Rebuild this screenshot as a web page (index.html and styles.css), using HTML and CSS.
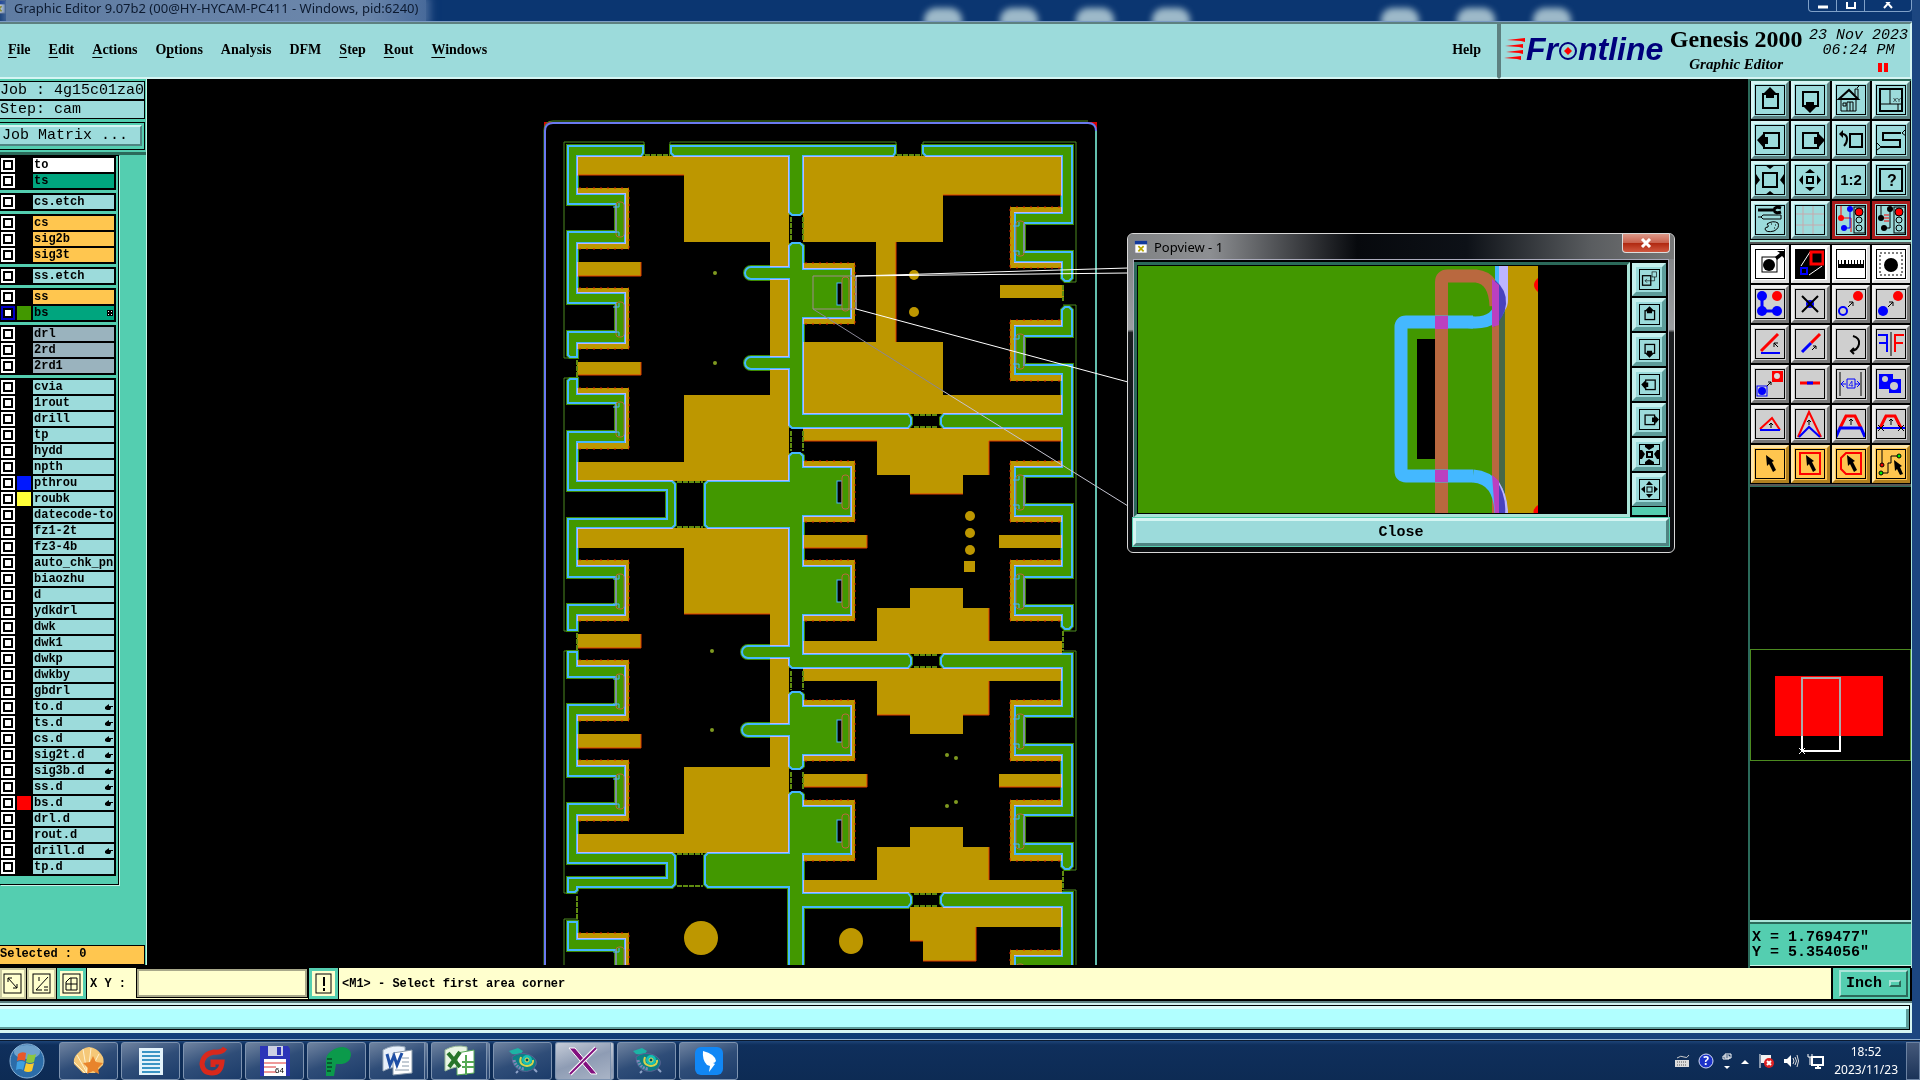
FILE: index.html
```html
<!DOCTYPE html>
<html lang="en">
<head>
    <meta charset="UTF-8">
    <meta name="viewport" content="width=device-width, initial-scale=1.0">
    <title>Graphic Editor 9.07b2</title>
    <link rel="stylesheet" href="styles.css">
</head>
<body>
    <!-- shared icons -->
    <svg class="defs" width="0" height="0">
        <symbol id="i-up" viewBox="0 0 30 30"><rect x="8" y="9" width="15" height="14" fill="none" stroke="#000" stroke-width="2"/><path d="M15 2l6 6h-2v5h-8V8H9z"/></symbol>
        <symbol id="i-down" viewBox="0 0 30 30"><rect x="8" y="7" width="15" height="14" fill="none" stroke="#000" stroke-width="2"/><path d="M15 28l6-6h-2v-5h-8v5H9z"/></symbol>
        <symbol id="i-left" viewBox="0 0 30 30"><rect x="9" y="8" width="15" height="15" fill="none" stroke="#000" stroke-width="2"/><path d="M2 15l6-6v3h5v7H8v3z"/></symbol>
        <symbol id="i-right" viewBox="0 0 30 30"><rect x="8" y="8" width="15" height="15" fill="none" stroke="#000" stroke-width="2"/><path d="M30 15l-6-6v3h-5v7h5v3z"/></symbol>
        <symbol id="i-in" viewBox="0 0 30 30"><rect x="8" y="8" width="14" height="14" fill="none" stroke="#000" stroke-width="2"/><path d="M10 0h10l-5 4zM10 30h10l-5-4zM1 9v11l4-5zM29 9v11l-4-5z"/></symbol>
        <symbol id="i-out" viewBox="0 0 30 30"><rect x="12" y="12" width="6" height="6" fill="none" stroke="#000" stroke-width="2"/><path d="M10 8h10l-5-4zM10 22h10l-5 4zM8 10v10l-4-5zM22 10v10l4-5z"/></symbol>
        <symbol id="p-in" viewBox="0 0 19 19"><rect x="7" y="7" width="5" height="5" fill="none" stroke="#000" stroke-width="2"/><path d="M5 0h9v2l-5 3-4-3zM5 19h9v-2l-5-3-4 3zM0 5v9h2l3-5-3-4zM19 5v9h-2l-3-5 3-4z"/></symbol>
        <symbol id="p-out" viewBox="0 0 19 19"><rect x="7" y="7" width="5" height="5" fill="none" stroke="#000"/><path d="M6 5h7L9 1zM6 14h7l-4 4zM5 6v7L1 9zM14 6v7l4-4z"/></symbol>
        <symbol id="i-pop" viewBox="0 0 30 30"><rect x="4" y="9" width="13" height="15" fill="none" stroke="#000" stroke-width="2"/><rect x="19" y="3" width="7" height="8" fill="none" stroke="#000"/><path d="M23 11v6H8m3-3l-3 3 3 3" fill="none" stroke="#000"/></symbol>
        <symbol id="i-cursor" viewBox="0 0 30 30"><path d="M11 6l8 6-2 1 4 8-3 2-4-8-2 2z"/></symbol>
        <symbol id="i-x" viewBox="0 0 16 16"><rect x="1" y="1" width="14" height="14" fill="#fff" stroke="#778"/><path d="M1 1h14v4H1z" fill="#123a9c"/><path d="M5 7l6 6M11 7l-6 6" stroke="#b9a800" stroke-width="2"/></symbol>
        <symbol id="i-turtle" viewBox="0 0 34 28"><path d="M3 4l9-3 5 3-3 4-8-1z" fill="#1db3a5"/><path d="M6 10q8-6 18-2 8 4 6 10-4 8-14 6-10-3-10-14z" fill="#0d7f86" stroke="#5b5f93"/><path d="M8 13q2 8 10 9" fill="none" stroke="#7f86b8" stroke-width="3" stroke-dasharray="2 1"/><path d="M15 10q-3 8 6 9 7-1 6-6" fill="none" stroke="#d9d34b" stroke-width="2"/><circle cx="21" cy="13" r="5" fill="#16c0b4"/><circle cx="21" cy="13" r="2" fill="#0a4a50" stroke="#e6e05a"/><path d="M28 22l3 3M12 24l-2 2" stroke="#8fa3c9" stroke-width="2"/></symbol>
    </svg>

    <div class="window">
        <div class="titlebar">
            <svg class="app-icon"><use href="#i-x"/></svg>
            <span class="caption">Graphic Editor 9.07b2 (00@HY-HYCAM-PC411 - Windows, pid:6240)</span>
            <span class="ghosts"><i></i><i></i><i></i><i></i></span>
            <span class="ghosts right"><i></i><i></i><i></i></span>
            <div class="window-buttons">
                <button aria-label="Minimize"><svg width="12" height="8"><path d="M1 5h10" stroke="#fff" stroke-width="3"/></svg></button>
                <button aria-label="Maximize"><svg width="12" height="8"><path d="M2 -2h8v8h-8z" fill="none" stroke="#fff" stroke-width="2"/></svg></button>
                <button class="wide" aria-label="Close"><svg width="12" height="8"><path d="M2 -3l8 9M10 -3l-8 9" stroke="#fff" stroke-width="2"/></svg></button>
            </div>
        </div>

        <div class="header">
            <div class="menubar">
                <button><u>F</u>ile</button>
                <button><u>E</u>dit</button>
                <button><u>A</u>ctions</button>
                <button>O<u>p</u>tions</button>
                <button>Analysis</button>
                <button>DFM</button>
                <button><u>S</u>tep</button>
                <button><u>R</u>out</button>
                <button><u>W</u>indows</button>
                <button class="help">Help</button>
            </div>
            <div class="brand">
                <div class="logo">
                    <svg width="22" height="24" viewBox="0 0 22 24"><path d="M3 3l18-2v4l-4 -1zM1 9l18-2v4l-4-1zM2 15l17-2v4l-4-1zM0 21l17-2v4l-4-1z" fill="#f00"/></svg>
                    <span>Fr<svg width="20" height="20" viewBox="0 0 20 20"><circle cx="10" cy="10" r="8" fill="none" stroke="#00007c" stroke-width="2"/><path d="M10 6l4 4-4 4-4-4z" fill="#f00"/></svg>ntline</span>
                </div>
                <div class="product">
                    <strong>Genesis 2000</strong>
                    <em>Graphic Editor</em>
                </div>
                <div class="date">23 Nov 2023<br>06:24 PM<span class="pause"></span></div>
            </div>
        </div>

        <div class="main">
            <div class="sidebar">
                <div class="job">
                    <div>Job : 4g15c01za0</div>
                    <div>Step: cam</div>
                </div>
                <div class="matrix"><button>Job Matrix ...</button></div>
                <div class="layers-wrap"><div class="layers" id="layers"></div></div>
                <div class="selected">Selected : 0</div>
            </div>

            <div class="canvas">
                <svg class="board" width="100%" height="100%">
                    <defs>
                        <g id="f-left"><path d="M0 0h52v61h-52v-6h48v-49h-48z" fill="#bd9700"/><path d="M2 0h50M2 61h50M52 2v59" stroke="#e02000" stroke-dasharray="2 5" fill="none"/></g>
                        <g id="f-right"><path d="M0 0h-52v61h52v-6h-48v-49h48z" fill="#bd9700"/><path d="M-2 0h-50M-2 61h-50M-52 2v59" stroke="#e02000" stroke-dasharray="2 5" fill="none"/></g>
                        <g id="slot" fill="none"><rect x="0" y="0" width="8" height="35" rx="3" stroke="#b9683f"/><path d="M-3 5h6v-4M-3 30h6v4" stroke="#44b8ff"/></g>
                        <g id="stub"><rect x="0" y="6" width="5" height="22" fill="#000" stroke="#44b8ff"/><path d="M5 6h6M5 28h6" stroke="#44b8ff"/><rect x="5" y="0" width="7" height="34" rx="3" fill="#429800" stroke="#b9683f"/></g>
                        <g id="areas">
                            <path d="M643 146H568V204H616V232H568V303H616V332H568V355l2 2H577V343H625V293H577V243H625V194H577V156H641l2-3z"/>
                            <path d="M570 379H577V394H625V442H577V481H672l3 3V525l-3 3H577V566H625V615H577V630H568V605H616V577H568V519H667V490H568V432H616V403H568V381z"/>
                            <path d="M568 652H577V666H625V715H577V766H625V815H577V853H672l3 3V884l-3 3H577V890l-2 2H568V878H667V863H568V804H616V776H568V705H616V677H568z"/>
                            <path d="M568 922H577V939H625V972H616V950H568z"/>
                            <path d="M671 146H895V153l-2 3H803V212l-3 3H792l-3-3V156H674l-3-3z"/>
                            <path d="M792 243H800l3 3V269H851V318H803V414H908l3 4V424l-3 4H792l-3-3V369H751a6 6 0 0 1 0-12H789V279H751a6 6 0 0 1 0-12H789V246z"/>
                            <path d="M792 453H800l3 3V467H851V516H803V566H851V615H803V654H908l3 4V664l-3 4H792l-3-3V658H748a6 6 0 0 1 0-12H789V528H708l-3-3V484l3-3H789V456z"/>
                            <path d="M792 692H800l3 3V706H851V755H803V766l-3 3H792l-3-3V736H748a6 6 0 0 1 0-12H789V695z"/>
                            <path d="M792 792H800l3 3V806H851V854H803V893H908l3 4V903l-3 4H803V972H789V887H708l-3-3V856l3-3H789V795z"/>
                            <path d="M923 146H1072V223H1024V252H1072V278l-3 3H1065l-3-3V262H1015V213H1062V156H926l-3-3z"/>
                            <path d="M1065 307H1069l3 3V336H1024V365H1072V476H1024V505H1072V577H1024V606H1072V626l-3 3H1065l-3-3V615H1015V566H1062V516H1015V467H1062V428H944l-3-4V418l3-4H1062V374H1015V326H1062V310z"/>
                            <path d="M944 654H1072V716H1024V745H1072V815H1024V844H1072V866l-3 3H1065l-3-3V854H1015V806H1062V755H1015V706H1062V668H944l-3-4V658z"/>
                            <path d="M944 893H1072V972H1015V956H1062V907H944l-3-4V897z"/>
                        </g>
                    </defs>
                    <g transform="translate(-147 -79)">
                        <!-- profile -->
                        <path d="M545 131v-8h8M1087 123h9v8" fill="none" stroke="#e00000" stroke-width="2"/>
                        <path d="M1096 130v840" stroke="#62bfae" stroke-width="2"/>
                        <path d="M544 970V130q0-9 9-9h535" fill="none" stroke="#4c8a20"/>
                        <path d="M545 970V131q0-8 8-8h535q8 0 8 8" fill="none" stroke="#6a7af0" stroke-width="2"/>
                        <path d="M644 155v-13h-80v216h14M578 378h-14v253h14M578 651h-14v242h14M578 919h-14v50M670 155v-13h226v13M923 155v-13h153v140h-12M1063 305h13v326h-13M1063 651h13v219h-13M1063 890h13v79" fill="none" stroke="#4c8a20"/>

                        <use href="#areas" class="area-rim"/>

                        <!-- copper -->
                        <g fill="#bd9700">
                            <path d="M577 156h212v325H577v-19h107v-67h86V242h-86v-67H577z"/>
                            <path d="M577 528h212v325H577v-19h107v-67h86V614h-86v-66H577z"/>
                            <path d="M803 156h259v39H943v47h-47v100h47v53h119v19H803v-72h73V242h-73z"/>
                            <path d="M803 428h259v13h-73v34h-26v19h-53v-19h-33v-34h-74z"/>
                            <path d="M803 654v-13h74v-33h33v-20h53v20h26v33h73v13z"/>
                            <path d="M803 668h259v13h-73v34h-26v19h-53v-19h-33v-34h-74z"/>
                            <path d="M803 893v-13h74v-33h33v-20h53v20h26v33h73v13z"/>
                            <path d="M910 907h152v20h-86v34h-53v-20h-13z"/>
                            <path d="M577 262h64v14h-64zM577 362h64v13h-64zM577 634h64v14h-64zM577 734h64v14h-64z"/>
                            <path d="M803 535h64v13h-64zM803 774h64v13h-64zM999 535h63v13h-63zM999 774h63v13h-63zM1000 285h64v13h-64z"/>
                            <circle cx="701" cy="938" r="17"/><ellipse cx="851" cy="941" rx="12" ry="13"/>
                            <circle cx="914" cy="275" r="5"/><circle cx="914" cy="312" r="5"/>
                            <circle cx="970" cy="516" r="5"/><circle cx="970" cy="533" r="5"/><circle cx="970" cy="550" r="5"/>
                            <path d="M964 561h11v11h-11z"/>
                        </g>
                        <g fill="#7f9a20"><circle cx="715" cy="273" r="2"/><circle cx="715" cy="363" r="2"/><circle cx="712" cy="651" r="2"/><circle cx="712" cy="730" r="2"/><circle cx="947" cy="755" r="2"/><circle cx="956" cy="758" r="2"/><circle cx="947" cy="806" r="2"/><circle cx="956" cy="802" r="2"/></g>
                        <path d="M577 175h107M943 195h119M577 276h64v-14M577 375h64v-13M577 648h64v-14M577 748h64v-14M684 614h86M803 441h74M989 475v-34h73M910 494h53M803 548h64v-13M803 787h64v-13M989 608v33M989 681v34h-26M877 715h33M989 847v33M999 787h63M896 242v100M976 927v34h-53M923 941h-13" fill="none" stroke="#e03a00"/>
                        <g id="fingers"></g>

                        <!-- gaps between areas -->
                        <path d="M789 215h14v28h-14zM789 428h14v25h-14zM789 668h14v24h-14zM789 769h14v23h-14z"/>

                        <!-- solder areas -->
                        <use href="#areas" class="area-fill"/>
                        <use href="#areas" class="area-edge"/>

                        <!-- break tabs -->
                        <g fill="none" stroke="#5f8c10" stroke-width="2" stroke-dasharray="5 1">
                            <path d="M645 155h25M897 155h25M791 217v24M803 217v24M677 482h26M677 527h26M914 415h24M914 427h24M791 431v20M803 431v20M791 671v19M803 671v19M791 772v18M803 772v18M677 854h26M677 886h26M914 655h24M914 667h24M914 894h24M914 906h24M577 360v17M577 633v17M577 896v23M1063 285v16M1063 631v20M1063 871v19"/>
                        </g>
                        <g id="slots"></g>

                        <!-- popview area -->
                        <g fill="none">
                            <path d="M856 276h-43v33h43" stroke="#a08a8c"/>
                            <path d="M856 276v33" stroke="#fff"/>
                            <path d="M856 276l272-8M856 276l272-3M856 309l272 73" stroke="#fff"/>
                            <path d="M813 309l130 82" stroke="#8a8798"/>
                            <path d="M943 391l185 115" stroke="#c4c4d0"/>
                        </g>
                    </g>
                </svg>

                <div class="popview">
                    <div class="pop-title">
                        <svg class="app-icon"><use href="#i-x"/></svg>
                        <span>Popview - 1</span>
                        <button aria-label="Close window"><svg width="12" height="10"><path d="M2 1l8 8M10 1l-8 8" stroke="#fff" stroke-width="3"/></svg></button>
                    </div>
                    <div class="pop-body">
                        <div class="pop-view">
                            <svg width="100%" height="100%" viewBox="0 0 490 247" preserveAspectRatio="xMinYMin slice">
                                <rect width="361" height="248" fill="#429800"/>
                                <rect x="361" width="6" height="248" fill="#466848"/>
                                <rect x="367" width="33" height="248" fill="#bd9700"/>
                                <rect x="279" y="73" width="19" height="120" fill="#000"/>
                                <rect x="354" y="20" width="7" height="228" fill="#b9683f"/>
                                <path d="M303.500 260V16q0-6 6-6H338Q357 12 358 40" fill="none" stroke="#b9683f" stroke-width="13"/>
                                <path d="M335 56H268q-5 0-5 5V205q0 5 5 5H335" fill="none" stroke="#44b8ff" stroke-width="13"/>
                                <path d="M330 56Q363 60 363 30V0" fill="none" stroke="#44b8ff" stroke-width="12"/>
                                <path d="M335 210Q363 212 363 250" fill="none" stroke="#44b8ff" stroke-width="13"/>
                                <path d="M361 0h9v34q0 6-3 10l-6-20z" fill="#bdb5ff"/>
                                <path d="M361 216q9 14 9 32h-9z" fill="#bdb5ff"/>
                                <path d="M357 14q12 10 11 24q-1 12-12 23z" fill="#4942bd"/>
                                <path d="M357 212q12 18 10 36h-8z" fill="#4942bd"/>
                                <path d="M354 13l7 6v40l-7 2zM354 209l7 6v33h-4z" fill="#ba40c0"/>
                                <path d="M297 50h13v13h-13zM297 204h13v12h-13z" fill="#ba40c0"/>
                                <path d="M400 12q-8 7 0 14zM400 239q-6 4-4 9h4z" fill="#f00"/>
                            </svg>
                        </div>
                        <div class="pop-tools">
                            <button aria-label="Pick area"><svg><use href="#i-pop"/></svg></button>
                            <button aria-label="Pan up"><svg><use href="#i-up"/></svg></button>
                            <button aria-label="Pan down"><svg><use href="#i-down"/></svg></button>
                            <button aria-label="Pan left"><svg><use href="#i-left"/></svg></button>
                            <button aria-label="Pan right"><svg><use href="#i-right"/></svg></button>
                            <button aria-label="Zoom in"><svg><use href="#p-in"/></svg></button>
                            <button aria-label="Zoom out"><svg><use href="#p-out"/></svg></button>
                        </div>
                    </div>
                    <button class="pop-close">Close</button>
                </div>
            </div>

            <div class="toolbar">
                <div class="tools">
                    <button><svg><use href="#i-up"/></svg></button>
                    <button><svg><use href="#i-down"/></svg></button>
                    <button><svg viewBox="0 0 30 30" fill="none" stroke="#000"><path d="M3 14L13 5l9 9z" stroke-width="2"/><path d="M5 14v12h15V14M11 26v-9h6v9M14 17v9M7 18h3v3h-3zM19 10V4h3v9M21 3l2-2"/></svg></button>
                    <button><svg viewBox="0 0 30 30" fill="none" stroke="#000"><rect x="4" y="4" width="22" height="22" stroke-width="2"/><path d="M14 4v15M4 19h22M22 19v7"/><text x="17" y="17" font-size="6" fill="#000" stroke="none">XY</text></svg></button>
                    <button><svg><use href="#i-left"/></svg></button>
                    <button><svg><use href="#i-right"/></svg></button>
                    <button><svg viewBox="0 0 30 30" fill="none" stroke="#000" stroke-width="2"><rect x="14" y="9" width="12" height="13"/><path d="M4 9h3q4 1 4 5t-3 7"/><path d="M3 9l4-4v8z" fill="#000" stroke="none"/></svg></button>
                    <button><svg viewBox="0 0 30 30" fill="none" stroke="#000"><path d="M25 8H7v7h17v7H5" stroke-width="2"/><path d="M30 4l-4 4 4 3M1 18l4 4-4 3"/></svg></button>
                    <button><svg><use href="#i-in"/></svg></button>
                    <button><svg><use href="#i-out"/></svg></button>
                    <button><svg viewBox="0 0 30 30"><text x="15" y="20" font-size="15" text-anchor="middle" font-weight="bold">1:2</text></svg></button>
                    <button><svg viewBox="0 0 30 30"><rect x="4" y="4" width="22" height="22" fill="none" stroke="#000" stroke-width="2"/><text x="16" y="21" font-size="16" text-anchor="middle" font-weight="bold">?</text></svg></button>
                    <button><svg viewBox="0 0 30 30" fill="none" stroke="#000"><path d="M3 5h15" stroke-width="3"/><path d="M26 3q-6-2-7 2 1 4 7 2" stroke-width="3"/><path d="M3 12h3l2-2h18v4H8l-2-2"/><path d="M12 19q6-4 11-1 2 5-4 8-8 2-9-2 0-2 3-2 1-1-1-3zM16 19h1M20 20h1M19 23h1"/></svg></button>
                    <button><svg viewBox="0 0 30 30"><path d="M8 0v30M18 0v30M0 9h30M0 20h30" stroke="#c7a9ad"/></svg></button>
                    <button class="red"><svg viewBox="0 0 30 30"><path d="M5 0v13h10v14" fill="none" stroke="#f00"/><path d="M14 5v18H8" fill="none" stroke="#00f"/><circle cx="5" cy="13" r="3" fill="#f00"/><circle cx="14" cy="4" r="3" fill="#00f"/><circle cx="8" cy="23" r="3" fill="#00f"/><g fill="none" stroke="#000"><rect x="18" y="2" width="11" height="26"/><circle cx="23" cy="7" r="4" fill="#f00"/><circle cx="23" cy="15" r="3"/><circle cx="23" cy="23" r="3"/></g></svg></button>
                    <button class="red"><svg viewBox="0 0 30 30"><path d="M5 0v13M14 5v18H8" fill="none" stroke="#000"/><path d="M8 10h5M8 13h5M8 16h5" stroke="#f00"/><circle cx="5" cy="13" r="3"/><circle cx="14" cy="4" r="3"/><circle cx="8" cy="23" r="3"/><g fill="none" stroke="#000"><rect x="18" y="2" width="11" height="26"/><circle cx="23" cy="7" r="4" fill="#f00"/><circle cx="23" cy="15" r="3"/><circle cx="23" cy="23" r="3"/></g></svg></button>
                </div>
                <div class="tools edit">
                    <button class="white"><svg viewBox="0 0 30 30"><rect x="7" y="8" width="15" height="15" fill="none" stroke="#000"/><circle cx="14" cy="16" r="6"/><path d="M20 8l5-4-3-2h8v8l-3-3-5 4z"/></svg></button>
                    <button class="white"><svg viewBox="0 0 30 30"><rect width="30" height="30"/><path d="M6 17L15 3M14 26l13-9" stroke="#fff"/><rect x="16" y="3" width="12" height="12" fill="none" stroke="#f00" stroke-width="3"/><rect x="6" y="19" width="6" height="6" fill="none" stroke="#00f" stroke-width="2"/></svg></button>
                    <button class="white"><svg viewBox="0 0 30 30"><path d="M2 11v8h26v-8h-1v4h-2v-4h-1v4h-2v-4h-1v4h-2v-4h-1v4h-2v-4h-1v4h-2v-4h-1v4h-2v-4h-1v4H9v-4H8v4H6v-4H5v4H3v-4z"/></svg></button>
                    <button class="white"><svg viewBox="0 0 30 30"><rect x="4" y="4" width="22" height="22" fill="none" stroke="#000" stroke-dasharray="2 2"/><circle cx="15" cy="16" r="7"/></svg></button>

                    <button><svg viewBox="0 0 30 30"><path d="M7 7v15h15" fill="none" stroke="#00f" stroke-width="3"/><g fill="#00f"><circle cx="7" cy="7" r="5"/><circle cx="7" cy="22" r="5"/><circle cx="22" cy="22" r="5"/></g><circle cx="22" cy="7" r="5" fill="#f00"/></svg></button>
                    <button><svg viewBox="0 0 30 30"><circle cx="15" cy="15" r="4" fill="#00f"/><path d="M7 7l16 16M23 7L7 23" stroke="#000" stroke-width="2"/></svg></button>
                    <button><svg viewBox="0 0 30 30"><circle cx="22" cy="7" r="5" fill="#f00"/><circle cx="7" cy="22" r="4" fill="none" stroke="#00f" stroke-width="2"/><path d="M12 18l5-5m-4 0h4v4" fill="none" stroke="#000"/></svg></button>
                    <button><svg viewBox="0 0 30 30"><circle cx="22" cy="7" r="5" fill="#f00"/><circle cx="7" cy="22" r="5" fill="#00f"/><path d="M12 18l5-5m-4 0h4v4" fill="none" stroke="#000"/></svg></button>

                    <button><svg viewBox="0 0 30 30" fill="none"><path d="M6 22L23 5" stroke="#f00" stroke-width="3"/><path d="M6 24h19" stroke="#00f" stroke-width="2"/><path d="M23 18l-4-4m0 4v-4h4" stroke="#000"/></svg></button>
                    <button><svg viewBox="0 0 30 30" fill="none"><path d="M16 14l9-9" stroke="#f00" stroke-width="3"/><path d="M7 23l9-9" stroke="#00f" stroke-width="3"/><path d="M17 21l4-4m-3 0h3v3" stroke="#000"/></svg></button>
                    <button><svg viewBox="0 0 30 30" fill="none"><path d="M17 7q7 2 6 8t-8 7m3-3l-3 3 3 3" stroke="#000" stroke-width="2"/></svg></button>
                    <button><svg viewBox="0 0 30 30" fill="none"><path d="M2 6h9v17M3 14h8" stroke="#00f" stroke-width="2"/><path d="M28 6h-9v17M19 14h8" stroke="#f00" stroke-width="2"/><path d="M15 3v24" stroke="#000"/></svg></button>

                    <button><svg viewBox="0 0 30 30"><rect x="17" y="2" width="11" height="11" fill="#f00"/><circle cx="22" cy="7" r="3" fill="#ddd"/><rect x="2" y="17" width="10" height="10" fill="none" stroke="#00f"/><circle cx="7" cy="22" r="4" fill="#00f"/><path d="M12 17l4-4m-3 0h3v3" fill="none" stroke="#000"/></svg></button>
                    <button><svg viewBox="0 0 30 30"><path d="M5 14h20" stroke="#f00" stroke-width="3"/><path d="M12 14h6" stroke="#00f" stroke-width="3"/></svg></button>
                    <button><svg viewBox="0 0 30 30" fill="none"><path d="M4 3v24M25 3v24" stroke="#000"/><path d="M5 15h5M19 15h5M8 12l-3 3 3 3M21 12l3 3-3 3M11 10h8v9h-8z" stroke="#00f"/><text x="15" y="18" font-size="9" text-anchor="middle" fill="#00f">4</text></svg></button>
                    <button><svg viewBox="0 0 30 30"><path d="M3 5h14v5h8v14H13v-4H3z" fill="#00f"/><circle cx="9" cy="10" r="3" fill="#ccc"/><circle cx="18" cy="17" r="4" fill="#ccc"/></svg></button>

                    <button><svg viewBox="0 0 30 30" fill="none"><path d="M5 20L17 9l8 12" stroke="#f00" stroke-width="2"/><path d="M5 21h20" stroke="#00f" stroke-width="2"/><path d="M16 19v-5m-2 2l2-2 2 2" stroke="#000"/></svg></button>
                    <button><svg viewBox="0 0 30 30" fill="none"><path d="M3 28L14 3l12 25" stroke="#f00" stroke-width="2"/><path d="M4 28l10-10 11 10" stroke="#00f" stroke-width="2"/><path d="M14 16v-5m-2 2l2-2 2 2" stroke="#000"/></svg></button>
                    <button><svg viewBox="0 0 30 30" fill="none"><path d="M4 19l6-12h9l6 12" stroke="#f00" stroke-width="3"/><path d="M0 28l4-9h21l4 9" stroke="#00f" stroke-width="3"/><path d="M15 16v-6m-2 2l2-2 2 2" stroke="#000"/></svg></button>
                    <button><svg viewBox="0 0 30 30" fill="none"><path d="M4 19l6-12h9l6 12" stroke="#f00" stroke-width="3"/><path d="M0 19h30" stroke="#00f" stroke-width="2"/><path d="M15 16v-6m-2 2l2-2 2 2M2 16l6 6M8 16l-6 6M22 16l6 6M28 16l-6 6" stroke="#000"/></svg></button>

                    <button class="gold"><svg><use href="#i-cursor"/></svg></button>
                    <button class="gold"><svg viewBox="0 0 30 30"><rect x="5" y="4" width="20" height="21" fill="none" stroke="#f00" stroke-width="2"/><use href="#i-cursor"/></svg></button>
                    <button class="gold"><svg viewBox="0 0 30 30"><path d="M10 4h15v21H10l-5-5V9z" fill="none" stroke="#f00" stroke-width="2"/><use href="#i-cursor"/></svg></button>
                    <button class="gold"><svg viewBox="0 0 30 30"><path d="M6 0v15M6 24h6V14h3V7h7" fill="none" stroke="#000"/><circle cx="6" cy="16" r="2" fill="#e00" stroke="#000"/><circle cx="5" cy="24" r="2" fill="#0e0" stroke="#000"/><circle cx="23" cy="7" r="2" fill="#0e0" stroke="#000"/><path d="M18 11l8 6-2 1 3 7-3 1-3-6-2 2z"/></svg></button>
                </div>
                <div class="overview">
                    <svg width="100%" height="112" viewBox="0 0 161 112">
                        <rect x="0.500" y="0.500" width="160" height="111" fill="none" stroke="#4c8a20"/>
                        <rect x="25" y="27" width="108" height="60" fill="#f00"/>
                        <path d="M52 87v15h38V87" fill="none" stroke="#fff" stroke-width="2"/>
                        <path d="M52 87V29h38v58" fill="none" stroke="#aaa" stroke-width="2"/>
                        <path d="M49 99l6 6M55 99l-6 6" stroke="#fff"/>
                    </svg>
                </div>
                <div class="coords">X = 1.769477"<br>Y = 5.354056"</div>
            </div>
        </div>

        <div class="statusbar">
            <button class="mode" aria-label="Line mode"><svg width="18" height="20" fill="none" stroke="#000"><rect x="0" y="0" width="17" height="19"/><path d="M4 4l9 10M4 8V4h4M13 10v4h-4"/></svg></button>
            <button class="mode" aria-label="Angle mode"><svg width="18" height="20" fill="none" stroke="#000"><rect x="0" y="0" width="17" height="19"/><path d="M3 16L15 3M3 16h6M6 3v4M11 13h4M11 16h4"/></svg></button>
            <button class="mode on" aria-label="Grid"><svg width="18" height="20" fill="none" stroke="#000"><rect x="0" y="0" width="17" height="19"/><path d="M3 8l4-4h7v12H3zM8 4v12M3 10h11"/></svg></button>
            <label for="xy">X Y :</label>
            <input id="xy" type="text">
            <button class="mode on" aria-label="Alert"><svg width="16" height="20" fill="none" stroke="#000"><rect x="0" y="0" width="15" height="19"/><path d="M8 3v9M8 14v3" stroke-width="2"/></svg></button>
            <span class="prompt">&lt;M1&gt; - Select first area corner</span>
            <div class="units"><select aria-label="Units"><option>Inch</option><option>mm</option></select><i></i></div>
        </div>
        <div class="message"><div></div></div>
    </div>

    <div class="taskbar">
        <button class="start" aria-label="Start"><svg width="38" height="38" viewBox="0 0 38 38"><circle cx="19" cy="19" r="17" fill="#2b6ca8" stroke="#8cb4d8"/><ellipse cx="19" cy="10" rx="13" ry="7" fill="#9cc6e4" opacity=".6"/><path d="M10 12q4-3 8-1l-1 8q-4-2-8 0z" fill="#e8582a"/><path d="M20 12q4 2 8 0l-2 8q-4 2-8 0z" fill="#8cc63e"/><path d="M9 20q4-2 8 0l-2 8q-3-2-7 0z" fill="#3f9fe0"/><path d="M18 21q4 2 8 0l-2 8q-4 2-8 0z" fill="#fbc92e"/></svg></button>
        <button class="task"><svg width="36" height="30" viewBox="0 0 36 30"><path d="M12 27L3 18q-1-6 3-10 5-6 12-7 8 1 12 7 4 5 2 11l-8 8z" fill="#f5c878"/><path d="M16 27L6 9M16 27L12 3M17 27L20 2M18 27L28 8M14 27L3 16" stroke="#fff0cc"/><path d="M22 10l3 6 7 1-5 5 1 6-6-3-6 3 1-6-5-5 7-1z" fill="#e8842c"/></svg></button>
        <button class="task"><svg width="26" height="30"><path d="M1 2h24v27H1z" fill="#e4f3fb"/><path d="M4 6h18M4 10h18M4 14h18M4 18h18M4 22h18M4 26h18" stroke="#3b94c4" stroke-width="2"/></svg></button>
        <button class="task"><svg width="30" height="30" fill="none"><path d="M27 2q-3 5-11 4Q5 8 4 18q1 9 10 9 9 0 10-11h-9v5" stroke="#d8281c" stroke-width="5"/></svg></button>
        <button class="task"><svg width="32" height="32"><path d="M1 1h28l2 3v27H1z" fill="#2d35b8"/><path d="M9 1h15v10H9z" fill="#ccd0e4"/><path d="M18 2h4v8h-4z" fill="#2d35b8"/><path d="M5 14h22v17H5z" fill="#fff"/><path d="M5 18h22M5 22h12M5 27h12" stroke="#d33"/><text x="16" y="28" font-size="8">64</text></svg></button>
        <button class="task"><svg width="30" height="32"><path d="M8 7q6-5 13-5 8 1 8 8-1 8-9 9h-6l-2 12H4V16q0-6 4-9z" fill="#0b9a4b"/><path d="M5 14h5M5 18h5M5 22h5M5 26h4" stroke="#075c2e" stroke-width="2"/></svg></button>
        <button class="task multi"><svg width="34" height="32"><path d="M3 5q10-6 22-3v20q-10-2-22 4z" fill="#e8f0fa" stroke="#9ab"/><path d="M13 8l19-3v23l-19 2z" fill="#fff" stroke="#89a"/><path d="M22 13h7M22 17h7M22 21h7M15 25h14" stroke="#89a"/><path d="M7 9l3 11 4-9 3 9 5-12" fill="none" stroke="#1f4fa5" stroke-width="3"/></svg></button>
        <button class="task multi"><svg width="34" height="32"><path d="M3 5q10-6 22-3v20q-10-2-22 4z" fill="#e8f5e4" stroke="#9b9"/><path d="M15 8l17-3v23l-17 2z" fill="#fff" stroke="#5a5"/><path d="M20 17h12M20 22h12M24 10v20" stroke="#5a5" stroke-width="2"/><path d="M6 8l12 14M18 7L7 22" stroke="#27752a" stroke-width="4"/></svg></button>
        <button class="task"><svg width="34" height="28"><use href="#i-turtle"/></svg></button>
        <button class="task active multi"><svg width="32" height="30"><path d="M2 2h6l22 26h-6z" fill="#82107e" stroke="#fff"/><path d="M29 2L3 28" stroke="#fff" stroke-width="4"/><path d="M29 2L3 28" stroke="#82107e" stroke-width="2"/></svg></button>
        <button class="task"><svg width="34" height="28"><use href="#i-turtle"/></svg></button>
        <button class="task"><svg width="30" height="30"><rect x="1" y="1" width="28" height="28" rx="6" fill="#1187f5"/><path d="M9 5q12 3 13 10-1 2-3 2l2 1-6 8 1-6-3-1q-5-5-4-14z" fill="#fff"/></svg></button>
        <div class="tray">
            <svg width="16" height="14"><path d="M1 6h14v7H1z" fill="#ddd"/><path d="M3 8h10M3 11h10" stroke="#555" stroke-dasharray="1 1"/><path d="M3 4q4-3 7-1t5-2" fill="none" stroke="#ccc"/></svg>
            <svg width="16" height="16"><circle cx="8" cy="8" r="7" fill="#1c33c8" stroke="#d4dcf6"/><text x="8" y="12" font-size="12" font-weight="bold" fill="#fff" text-anchor="middle">?</text></svg>
            <svg width="10" height="20"><path d="M3 3h6v4H3zM1 5h6v3H1z" fill="none" stroke="#fff"/><path d="M2 15h6l-3 3z" fill="#fff"/></svg>
            <svg width="10" height="10"><path d="M1 8h8L5 4z" fill="#fff"/></svg>
            <svg width="17" height="16"><path d="M2 1v14" stroke="#fff"/><path d="M3 2h10v8H3z" fill="#f2f2f2"/><circle cx="11" cy="10" r="5" fill="#d22"/><path d="M9 8l4 4M13 8l-4 4" stroke="#fff" stroke-width="2"/></svg>
            <svg width="16" height="16" fill="none"><path d="M1 6h3l4-4v12L4 10H1z" fill="#fff"/><path d="M10 5q2 3 0 6M12 4q3 4 0 8M14 2q3 6 0 12" stroke="#ddd"/></svg>
            <svg width="17" height="16" fill="none"><path d="M5 4h11v8H5zM8 15h6M11 12v3" stroke="#fff" stroke-width="2"/><path d="M1 1v3h4V1M3 4v8" stroke="#fff"/></svg>
            <div class="clock">18:52<br>2023/11/23</div>
            <button class="show-desktop" aria-label="Show desktop"></button>
        </div>
    </div>

    <script>
        // layer groups: [name, row colour, swatch, mark]
        const groups = [
            [['to', 'white'], ['ts', 'mask']],
            [['cs.etch']],
            [['cs', 'signal'], ['sig2b', 'signal'], ['sig3t', 'signal']],
            [['ss.etch']],
            [['ss', 'signal'], ['bs', 'mask', '#429800', 'grid']],
            [['drl', 'drill'], ['2rd', 'drill'], ['2rd1', 'drill']],
            [['cvia'], ['1rout'], ['drill'], ['tp'], ['hydd'], ['npth'], ['pthrou', '', '#0018ff'],
             ['roubk', '', '#ffff38'], ['datecode-to'], ['fz1-2t'], ['fz3-4b'], ['auto_chk_pnl'],
             ['biaozhu'], ['d'], ['ydkdrl'], ['dwk'], ['dwk1'], ['dwkp'], ['dwkby'], ['gbdrl'],
             ['to.d', '', '', 'hand'], ['ts.d', '', '', 'hand'], ['cs.d', '', '', 'hand'],
             ['sig2t.d', '', '', 'hand'], ['sig3b.d', '', '', 'hand'], ['ss.d', '', '', 'hand'],
             ['bs.d', '', '#ff0000', 'hand'], ['drl.d'], ['rout.d'], ['drill.d', '', '', 'hand'], ['tp.d']]
        ];
        const marks = {
            hand: '<svg width="8" height="8"><path d="M0 4l4-3v2h4v1H6v1l-1 2H2l-2-1z"/></svg>',
            grid: '<svg width="6" height="6"><path d="M0 0h6v6H0z"/><path d="M1 1h1v1H1zM4 1h1v1H4zM1 4h1v1H1zM4 4h1v1H4z" fill="#fff"/></svg>'
        };
        document.getElementById('layers').innerHTML = groups.map(group =>
            '<div class="group">' + group.map(([name, type = '', color = '', mark = '']) => `
                <div class="layer">
                    <input type="checkbox" id="layer-${name}" class="${name === 'bs' ? 'work' : ''}">
                    <span class="swatch" ${color ? `style="background:${color}"` : ''}></span>
                    <label for="layer-${name}" class="${type}">${name}${marks[mark] || ''}</label>
                </div>`).join('') + '</div>').join('');

        // connector fingers, y of the inner top edge
        const left = [194, 294, 394, 566, 666, 766, 939];
        const center = [269, 467, 566, 706, 806];
        const right = [213, 326, 467, 566, 706, 806, 956];
        const use = (id, x, y) => `<use href="#${id}" x="${x}" y="${y}"/>`;
        document.getElementById('fingers').innerHTML =
            left.map(y => use('f-left', 577, y - 6)).join('') +
            center.map(y => use('f-left', 803, y - 6)).join('') +
            right.map(y => use('f-right', 1062, y - 6)).join('');
        document.getElementById('slots').innerHTML =
            left.map(y => use('slot', 616, y + 8)).join('') +
            center.map(y => use('stub', 837, y + 8)).join('') +
            right.map(y => use('slot', 1016, y + 8)).join('');
    </script>
</body>
</html>
```

FILE: styles.css
```css
* {
    margin: 0;
    padding: 0;
    box-sizing: border-box;
}
body {
    height: 100vh;
    display: flex;
    flex-direction: column;
    overflow: hidden;
    background: #0e3059;
    color: #000;
    font-family: "Liberation Mono", monospace;
    font-size: 12px;
}
button {
    font: inherit;
    color: inherit;
    background: none;
    border: none;
}
.defs {
    position: absolute;
}
.window {
    flex: 1;
    min-height: 0;
    display: flex;
    flex-direction: column;
    padding: 0 8px 6px 0;
    background: linear-gradient(to right, #14407c, #0d3a72 60%, #1c4680);
    border-bottom: 1px solid #8fb0d0;
}

/* title bar */
.titlebar {
    height: 22px;
    display: flex;
    align-items: flex-start;
    background: #0b3671;
    border-bottom: 1px solid #7b9cc4;
    overflow: hidden;
}
.app-icon {
    width: 14px;
    height: 14px;
    flex: none;
}
.titlebar .app-icon {
    margin-left: -8px;
}
.caption {
    flex: none;
    font-family: "Noto Sans", sans-serif;
    font-size: 13px;
    line-height: 16px;
    height: 22px;
    color: #0c1a30;
    padding: 0 8px;
    background: linear-gradient(to right, #5f7ca2, #6c87ab 85%, #486a9a);
    box-shadow: 0 0 8px 4px #486a9a;
}
.ghosts {
    height: 22px;
    display: flex;
    gap: 38px;
    padding-top: 8px;
    margin-left: 26%;
    filter: blur(3px);
}
.ghosts i {
    width: 38px;
    height: 18px;
    border-radius: 12px 12px 0 0;
    background: #9db9c9;
}
.ghosts.right {
    margin-left: 10%;
}
.window-buttons {
    display: flex;
    height: 12px;
    margin-left: auto;
    border: 1px solid #7fa0c8;
    border-top: none;
    border-radius: 0 0 4px 4px;
}
.window-buttons button {
    width: 28px;
    height: 11px;
    border-right: 1px solid #7fa0c8;
    line-height: 0;
}
.window-buttons .wide {
    width: 46px;
    border-right: none;
}

/* menu and logo */
.header {
    height: 57px;
    display: flex;
    background: #000;
}
.menubar,
.brand {
    background: #9cdbdb;
    border: 2px solid #d5f5f3;
    border-top-color: #5d8080;
    display: flex;
    align-items: center;
}
.menubar {
    flex: 1;
    border-left: none;
    padding: 0 16px 1px 8px;
    gap: 18px;
    font-family: "Liberation Serif", serif;
    font-size: 14px;
    font-weight: bold;
    border-right-color: #5d8080;
}
.menubar u {
    text-underline-offset: 3px;
}
.menubar .help {
    margin-left: auto;
}
.brand {
    width: 413px;
    padding: 0 2px 0 3px;
    align-items: flex-start;
    border-left-color: #5d8080;
}
.logo {
    display: flex;
    align-items: center;
    padding-top: 7px;
    font: italic bold 32px/36px "Liberation Sans", sans-serif;
    color: #00007c;
}
.logo span svg {
    vertical-align: -1px;
}
.product {
    flex: 1;
    text-align: center;
    white-space: nowrap;
    font-family: "Liberation Serif", serif;
}
.product strong {
    display: block;
    font-size: 24px;
    line-height: 30px;
}
.product em {
    display: block;
    font-size: 15px;
    line-height: 20px;
    font-weight: bold;
}
.date {
    font-size: 15px;
    line-height: 15px;
    font-style: italic;
    text-align: center;
    padding-top: 4px;
}
.pause {
    display: block;
    width: 10px;
    height: 9px;
    margin: 5px 20px 0 auto;
    border: solid #f00;
    border-width: 0 4px;
}

/* work area */
.main {
    flex: 1;
    min-height: 0;
    display: flex;
    background: #000;
}
.sidebar {
    width: 147px;
    display: flex;
    flex-direction: column;
    background: #54ceb0;
    border-right: 1px solid #c8f4e8;
    margin-bottom: 3px;
}
.job {
    padding: 2px 1px 2px 0;
    font-size: 15px;
    white-space: nowrap;
}
.job div {
    height: 19px;
    line-height: 18px;
    background: #9cdbdb;
    border: 1px solid #000;
    border-left: none;
    overflow: hidden;
}
.matrix {
    border: 1px solid #000;
    border-left: none;
    margin: 1px 1px 2px 0;
    padding: 2px 2px 3px 0;
}
.matrix button {
    display: block;
    width: 100%;
    height: 21px;
    line-height: 17px;
    font-size: 15px;
    text-align: left;
    padding-left: 2px;
    background: #9cdbdb;
    border: 2px solid #d5f5f3;
    border-left: none;
    border-right-color: #4f8482;
    border-bottom-color: #4f8482;
}
.layers-wrap {
    flex: 1;
    min-height: 0;
    border-top: 3px solid #2b6a5a;
}
.layers {
    width: 119px;
    padding: 0 2px 8px 0;
    display: flex;
    flex-direction: column;
    gap: 3px;
    border: 1px solid #000;
    border-left: none;
    box-shadow: 1px 1px 0 #c8f4e8;
}
.group {
    background: #000;
    padding: 1px 0;
}
.layer {
    height: 16px;
    display: flex;
    align-items: center;
    gap: 2px;
    padding: 0 2px 0 1px;
}
.layer input {
    appearance: none;
    flex: none;
    width: 14px;
    height: 14px;
    background: #fff;
    border: 2px solid #fff;
    outline: 2px solid #000;
    outline-offset: -4px;
}
.layer input.work {
    border: 3px solid #0000c8;
}
.swatch {
    width: 14px;
    height: 14px;
    flex: none;
}
.layer label {
    flex: 1;
    min-width: 0;
    height: 14px;
    line-height: 13px;
    font-weight: bold;
    white-space: nowrap;
    overflow: hidden;
    display: flex;
    align-items: center;
    justify-content: space-between;
    padding: 0 1px;
    background: #9cdbdb;
}
.layer label svg {
    flex: none;
}
.layer .white { background: #fff; }
.layer .mask { background: #00a57e; }
.layer .signal { background: #ffc64f; }
.layer .drill { background: #9ab3be; }
.selected {
    height: 20px;
    line-height: 17px;
    font-weight: bold;
    background: #ffc64f;
    border: 1px solid #000;
    border-left: none;
    margin-right: 1px;
}

.canvas {
    flex: 1;
    min-width: 0;
    position: relative;
    overflow: hidden;
    margin-bottom: 3px;
}
.board {
    display: block;
}
.area-rim {
    fill: none;
    stroke: #3c8a00;
    stroke-width: 4;
}
.area-fill {
    fill: #429800;
}
.area-edge {
    fill: none;
    stroke: #44b8ff;
    stroke-width: 2;
    mix-blend-mode: lighten;
}

/* floating popview window */
.popview {
    position: absolute;
    top: 154px;
    right: 73px;
    width: 548px;
    padding: 0 5px 6px;
    border: 1px solid #d8d8d8;
    border-radius: 6px;
    background: linear-gradient(#7c7e80, #9b9ea0 30%, #1b1e20 31%, #0a0c0f);
}
.pop-title {
    height: 25px;
    display: flex;
    align-items: center;
    margin: 0 -5px;
    padding-left: 6px;
    gap: 6px;
    border-radius: 5px 5px 0 0;
    background: linear-gradient(to right, #808284, #8d8f92 15%, #07090d 42%, #0d1117 62%, #5a5d60 85%, #777);
    font-family: "Noto Sans", sans-serif;
    font-size: 13px;
}
.pop-title button {
    align-self: flex-start;
    width: 48px;
    height: 19px;
    margin: 0 4px 0 auto;
    border: 1px solid #ddd;
    border-top: none;
    border-radius: 0 0 4px 4px;
    background: linear-gradient(#dc9888, #c9604c 50%, #b02810 51%, #d05840);
}
.pop-body {
    display: flex;
    gap: 2px;
    padding: 2px 2px 1px 0;
    border: 1px solid #aab;
    border-bottom: none;
    background: #000;
}
.pop-view {
    flex: 1;
    height: 255px;
    border: 3px solid #2b6a5a;
    border-right-color: #a9e4d8;
    border-bottom-color: #a9e4d8;
}
.pop-view svg {
    display: block;
    border: 1px solid #000;
}
.pop-tools {
    width: 34px;
    padding-top: 1px;
    background: #54ceb0;
    border-bottom: 2px solid #000;
}
.pop-tools button {
    display: block;
    width: 34px;
    height: 33px;
    margin-bottom: 2px;
    background: #9cdbdb;
    border: 4px solid;
    border-color: #c6f0ee #5d9c9a #5d9c9a #c6f0ee;
    outline: 1px solid #000;
    line-height: 0;
}
.pop-tools svg {
    width: 21px;
    height: 21px;
    border: 1px solid #000;
}
.pop-close {
    display: block;
    width: 100%;
    height: 28px;
    background: #9cdbdb;
    border: 3px solid;
    border-color: #d5f5f3 #4f8482 #4f8482 #d5f5f3;
    outline: 1px solid #54ceb0;
    font-size: 15px;
    font-weight: bold;
}

/* tool buttons */
.toolbar {
    width: 164px;
    display: flex;
    flex-direction: column;
    border-left: 2px solid #2b6a5a;
    border-right: 1px solid #a9e4d8;
}
.tools {
    display: grid;
    grid-template-columns: repeat(4, 1fr);
    gap: 2px;
    padding: 0 1px 1px 1px;
    border-top: 2px solid #2b6a5a;
    border-bottom: 2px solid #a9e4d8;
}
.tools button {
    height: 38px;
    background: #9cdbdb;
    border: 3px solid;
    border-color: #d5f5f3 #5d8080 #5d8080 #d5f5f3;
    line-height: 0;
}
.tools svg {
    width: 30px;
    height: 30px;
    outline: 1px solid #000;
    outline-offset: -1px;
    font-family: "Liberation Sans", sans-serif;
}
.tools .red {
    border-color: #a81c1c;
}
.edit {
    border-color: #555;
    padding-top: 1px;
}
.edit button {
    background: #cfcfcf;
    border-color: #efefef #777 #777 #efefef;
}
.edit .white {
    background: #fff;
    border-color: #fff #ddd #ddd #fff;
}
.edit .gold {
    background: #ffc64f;
    border-color: #ffe6a8 #b08020 #b08020 #ffe6a8;
}
.overview {
    flex: 1;
    display: flex;
    align-items: center;
    border-bottom: 2px solid #a9e4d8;
    border-top: 1px solid #2b6a5a;
    padding-top: 2px;
}
.coords {
    height: 44px;
    padding: 6px 2px;
    margin-bottom: 2px;
    background: #54ceb0;
    border-top: 2px solid #2b6a5a;
    border-bottom: 1px solid #c8f4e8;
    font-size: 15px;
    line-height: 15px;
    font-weight: bold;
}

/* bottom bars */
.statusbar {
    height: 33px;
    display: flex;
    align-items: stretch;
    background: #ffffce;
    border-bottom: 2px solid #000;
    font-weight: bold;
}
.mode {
    width: 29px;
    border: 2px solid #c9c9a0;
    outline: 1px solid #000;
    margin-right: 1px;
    line-height: 0;
}
.mode:first-child {
    width: 26px;
}
.mode svg {
    overflow: visible;
}
.mode.on {
    border: 3px solid #54ceb0;
}
.statusbar label {
    width: 47px;
    padding-left: 3px;
    line-height: 32px;
}
.statusbar input {
    width: 170px;
    margin: 1px 2px 2px 3px;
    padding-left: 4px;
    background: #ffffce;
    border: 2px solid #a8a88a;
    outline: 1px solid #000;
    font: inherit;
}
.prompt {
    flex: 1;
    padding-left: 3px;
    line-height: 32px;
}
.units {
    width: 81px;
    display: flex;
    align-items: center;
    background: #54ceb0;
    border-left: 2px solid #000;
    border-right: 2px solid #000;
    padding: 0 2px 0 6px;
}
.units select {
    appearance: none;
    flex: 1;
    height: 27px;
    padding-left: 5px;
    background: #54ceb0;
    border: 2px solid;
    border-color: #a9e4d8 #2b6a5a #2b6a5a #a9e4d8;
    font: bold 15px "Liberation Mono", monospace;
}
.units i {
    width: 12px;
    height: 7px;
    margin: 0 7px 0 -19px;
    border: 2px solid;
    border-color: #a9e4d8 #2b6a5a #2b6a5a #a9e4d8;
}
.message {
    height: 32px;
    padding: 2px 2px 3px 0;
    background: #d5f5f3;
    border-top: 2px solid #5d8080;
}
.message div {
    height: 100%;
    background: #b1ffff;
    border: 1px solid #000;
    border-left: none;
    box-shadow: inset 0 3px 0 #defffd, inset -3px -2px 0 #5d9c9a;
}

/* taskbar */
.taskbar {
    height: 40px;
    display: flex;
    align-items: center;
    gap: 3px;
    background: linear-gradient(#1d4478, #0f2f5c 10%, #0d2b54);
    border-top: 1px solid #0a1a30;
}
.start {
    width: 56px;
    padding-right: 2px;
    line-height: 0;
}
.task {
    width: 59px;
    height: 38px;
    display: flex;
    align-items: center;
    justify-content: center;
    border: 1px solid #7d93b0;
    border-radius: 3px;
    background: linear-gradient(160deg, #6f83a0, #2f4d78 50%, #1c3c6a);
    font-family: "Liberation Sans", sans-serif;
}
.task.multi {
    border-right: 4px double #7d93b0;
}
.task.active {
    background: linear-gradient(160deg, #c5ccd8, #8e9cb4 50%, #a9b4c6);
}
.tray {
    margin-left: auto;
    display: flex;
    align-items: center;
    gap: 8px;
    height: 100%;
    color: #fff;
    font-family: "Noto Sans", sans-serif;
}
.clock {
    margin-left: 2px;
    font-size: 12px;
    line-height: 18px;
    text-align: center;
}
.show-desktop {
    width: 14px;
    height: 38px;
    border: 1px solid #6b82a2;
    background: linear-gradient(#45597a, #1b3358);
}
```
